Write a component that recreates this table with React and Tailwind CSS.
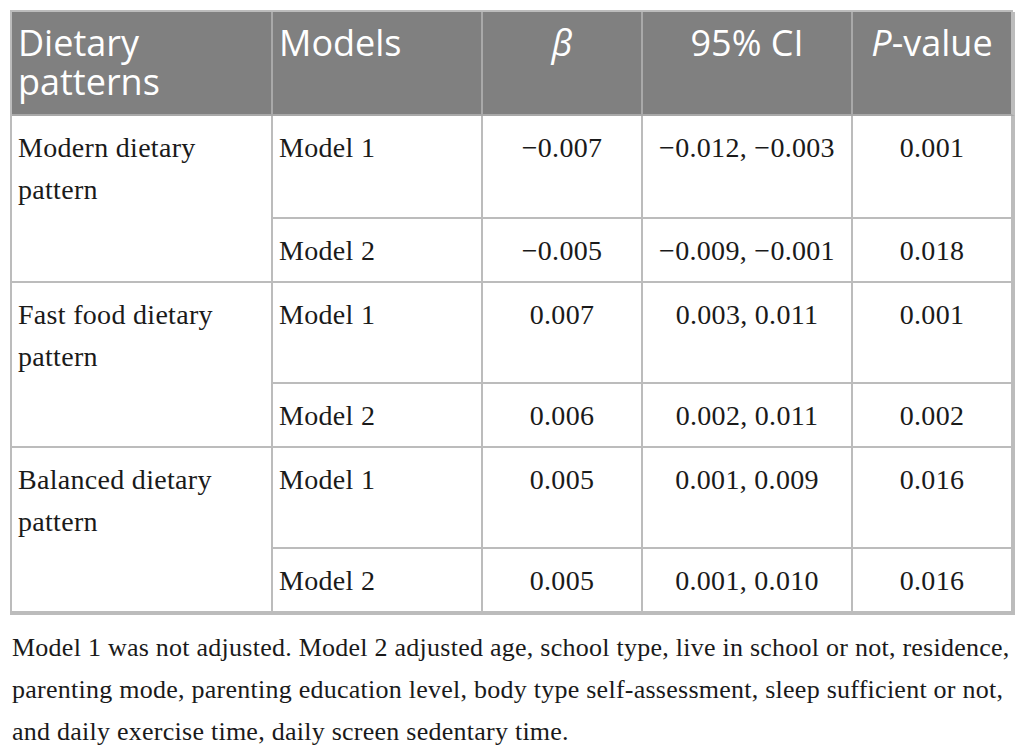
import React from "react";

const rows = [
  {
    pattern: ["Modern dietary", "pattern"],
    items: [
      { model: "Model 1", beta: "\u22120.007", ci: "\u22120.012, \u22120.003", p: "0.001" },
      { model: "Model 2", beta: "\u22120.005", ci: "\u22120.009, \u22120.001", p: "0.018" },
    ],
  },
  {
    pattern: ["Fast food dietary", "pattern"],
    items: [
      { model: "Model 1", beta: "0.007", ci: "0.003, 0.011", p: "0.001" },
      { model: "Model 2", beta: "0.006", ci: "0.002, 0.011", p: "0.002" },
    ],
  },
  {
    pattern: ["Balanced dietary", "pattern"],
    items: [
      { model: "Model 1", beta: "0.005", ci: "0.001, 0.009", p: "0.016" },
      { model: "Model 2", beta: "0.005", ci: "0.001, 0.010", p: "0.016" },
    ],
  },
];

const App = () => {
  const head = "bg-[#808080] border-r-2 border-b-2 border-[#a9a9a9] px-[6px] pt-[11px] text-white text-[36px] leading-[39px]";
  const cell = "border-r-2 border-b-2 border-[#bcbcbc] pt-[11px] px-[6px] text-[28px] leading-[42px] tracking-[0.3px] text-[#1a1a1a]";
  const sans = { fontFamily: "'Open Sans', sans-serif" };

  return (
    <div className="min-h-screen bg-white pt-[10px] pl-[10px]" style={{ fontFamily: "'Liberation Serif', serif" }}>
      <div className="grid w-[1003px] grid-cols-[261px_210px_160px_210px_162px] grid-rows-[104px_103px_64px_101px_64px_101px_66px] border-l-2 border-t-2 border-[#bcbcbc]">
        <div className={head} style={sans}>Dietary<br />patterns</div>
        <div className={head} style={sans}>Models</div>
        <div className={`${head} text-center`} style={sans}><i>&beta;</i></div>
        <div className={`${head} text-center`} style={sans}>95% CI</div>
        <div className={`${head} text-center border-r-4 border-r-[#bcbcbc]`} style={sans}><i>P</i>-value</div>

        {rows.map((g, gi) => (
          <React.Fragment key={gi}>
            <div className={`${cell} row-span-2 ${gi === 2 ? "border-b-4" : ""}`}>
              {g.pattern[0]}<br />{g.pattern[1]}
            </div>
            {g.items.map((it, i) => {
              const last = gi === 2 && i === 1 ? "border-b-4" : "";
              return (
                <React.Fragment key={i}>
                  <div className={`${cell} ${last}`}>{it.model}</div>
                  <div className={`${cell} ${last} text-center`}>{it.beta}</div>
                  <div className={`${cell} ${last} text-center`}>{it.ci}</div>
                  <div className={`${cell} ${last} text-center border-r-4`}>{it.p}</div>
                </React.Fragment>
              );
            })}
          </React.Fragment>
        ))}
      </div>

      <p className="pt-[12px] pl-[2px] text-[26px] leading-[42px] tracking-[0.25px] text-[#1a1a1a] whitespace-nowrap">
        Model 1 was not adjusted. Model 2 adjusted age, school type, live in school or not, residence,<br />
        parenting mode, parenting education level, body type self-assessment, sleep sufficient or not,<br />
        and daily exercise time, daily screen sedentary time.
      </p>
    </div>
  );
};

export default App;
